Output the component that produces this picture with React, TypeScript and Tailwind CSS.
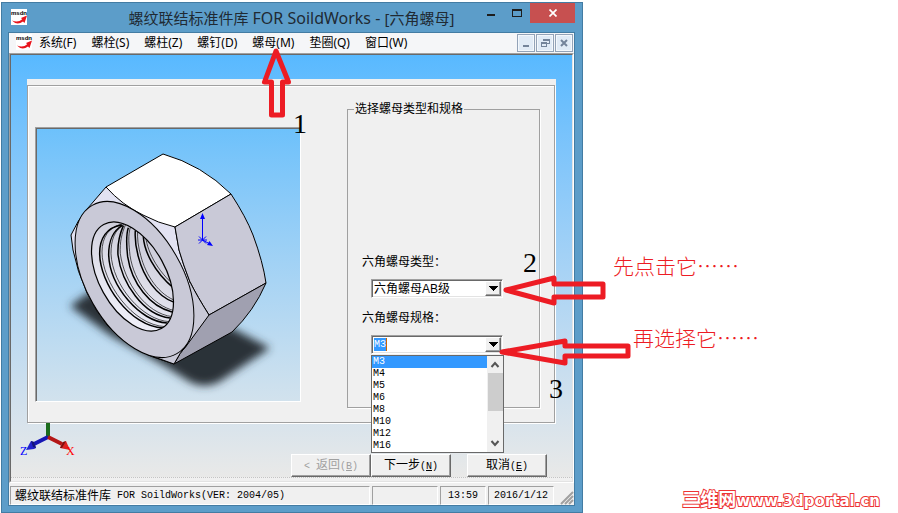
import React from "react";

const song = "font-['Liberation_Sans','Noto_Sans_CJK_SC',sans-serif]";

const menus = ["系统(F)", "螺栓(S)", "螺柱(Z)", "螺钉(D)", "螺母(M)", "垫圈(Q)", "窗口(W)"];
const sizes = ["M3", "M4", "M5", "M6", "M8", "M10", "M12", "M16"];

function Mono({ children }: { children: React.ReactNode }) {
  return (
    <span className="font-['Liberation_Mono',monospace] text-[10px] whitespace-pre">{children}</span>
  );
}

function MsdnIcon() {
  return (
    <svg width="18" height="16" viewBox="0 0 18 16" aria-hidden="true" className="shrink-0">
      <rect width="16" height="16" fill="#fff" />
      <text x="0" y="6" fontSize="6" fontWeight="bold" fontFamily="Liberation Sans, sans-serif" fill="#000">
        msdn
      </text>
      <path d="M1 11.5 Q6 17 12 12.5 L13.5 14 L16 6.5 L10 9 L11.2 10.3 Q7 14 1 11.5Z" fill="#e8141c" />
    </svg>
  );
}

function StepMark({ className, children }: { className: string; children: React.ReactNode }) {
  return (
    <span className={`absolute z-30 font-['Liberation_Serif',serif] text-[28px] leading-7 text-black ${className}`}>
      {children}
    </span>
  );
}

function DropArrow() {
  return (
    <svg width="9" height="5" viewBox="0 0 9 5" aria-hidden="true" shapeRendering="crispEdges">
      <path d="M0 0h9l-4.500 5z" fill="#000" />
    </svg>
  );
}

const raised =
  "bg-[#f0f0f0] border border-t-white border-l-white border-r-[#696969] border-b-[#696969] shadow-[inset_-1px_-1px_0_#a0a0a0]";
const sunken =
  "bg-white border border-t-[#a0a0a0] border-l-[#a0a0a0] border-r-white border-b-white shadow-[inset_1px_1px_0_#696969,inset_-1px_-1px_0_#e3e3e3]";

const threads = [
  "M185 255C140 262 119 295 119 340C119 430 210 560 309 564",
  "M187 256C155 275 146 305 146 345C150 440 240 545 321 549",
  "M190 257C178 285 172 310 174 345C185 430 250 525 330 534",
  "M205 263C196 290 200 320 203 350C215 430 270 500 336 516",
  "M226 272C224 300 228 325 235 350C250 410 290 470 345 488",
  "M250 290C252 330 280 395 345 448",
];

function NutDrawing() {
  const hole = { cx: 132.5, cy: 276.5, rx: 59.5, ry: 33.3 };
  return (
    <svg viewBox="37 129 263 272" className="block h-[272px] w-full" role="img" aria-label="六角螺母">
      <defs>
        <filter id="soft" x="-20%" y="-20%" width="140%" height="140%">
          <feGaussianBlur stdDeviation="4" />
        </filter>
        <clipPath id="hole">
          <ellipse {...hole} transform="rotate(61 132.5 276.5)" />
        </clipPath>
        <linearGradient id="bore" x1="0" y1="0" x2="1" y2="1">
          <stop offset="0" stopColor="#c4c4d2" />
          <stop offset="1" stopColor="#f6f6ff" />
        </linearGradient>
      </defs>
      <path
        d="M70 306 L90 292 L140 300 L232 328 L270 348 L219 382 Q204 389 190 382 L165 366 L110 335Z"
        fill="#2b3237"
        filter="url(#soft)"
      />
      <g stroke="#000" strokeWidth="1" strokeLinejoin="round">
        <path
          d="M106 187 L88 208 Q77 221 71 235 L73 250 Q77 271 87 293 Q96 312 107 325 Q117 336 130 345 Q141 352 153 357 L174 364 L209 315 Q197 296 190 282 Q183 264 179 250 L175 227 L140 200Z"
          fill="#e2e2f2"
        />
        <path d="M163 154 L106 187 Q122 205 143 215 Q158 223 175 227 L231 194 Q202 165 163 154Z" fill="#fff" />
        <path
          d="M175 227 L231 194 Q246 217 253 235 Q263 262 266 283 L209 315 Q197 296 190 282 Q183 264 179 250Z"
          fill="#c9c9d7"
        />
        <path d="M190 282 Q197 296 209 315 L187 345Z" fill="#c9c9d7" stroke="none" />
        <path d="M209 315 L266 283 Q254 311 232 332 L174 364 Q180 352 187 345Z" fill="#a0a0b0" />
        <path d="M146 354 L174 364 Q180 352 187 345 Q177 356 160 356Z" fill="#c9c9d7" />
        <ellipse cx="134.5" cy="279.5" rx="85.4" ry="48" transform="rotate(60.3 134.5 279.5)" fill="#c9c9d7" />
        <path d="M209 315 Q197 296 190 282" fill="none" />
        <ellipse {...hole} transform="rotate(61 132.5 276.5)" fill="url(#bore)" strokeWidth="1.2" />
      </g>
      <g clipPath="url(#hole)">
        <g transform="translate(60 140) scale(0.3333)" fill="none" stroke="#000">
          {threads.map((d) => (
            <g key={d}>
              <path d={d} strokeWidth="4.500" />
              <path d={d} strokeWidth="2" transform="translate(7 -4)" />
            </g>
          ))}
        </g>
      </g>
      <g stroke="#00f" fill="#00f" strokeWidth="1">
        <path d="M202.500 240V216M202.500 240L210 244" />
        <path d="M202.500 213l2.500 6h-5zM213 246l-6-1 2.500-4z" stroke="none" />
        <path d="M198 240h9M199 236.500l7 7M206 236.500l-7 7" />
      </g>
    </svg>
  );
}

function Triad() {
  return (
    <svg width="60" height="38" viewBox="20 424 60 38" aria-hidden="true">
      <path d="M46 424h4v14h-4z" fill="#1b6b1b" />
      <path d="M48 438L34 445" stroke="#1616b4" strokeWidth="4" />
      <path d="M48 438L62 445" stroke="#b41616" strokeWidth="4" />
      <path d="M26 451L31 442L34 443L36 449L34 450Z" fill="#2222cc" />
      <path d="M31 442l3 1 2 6-3-1z" fill="#12127a" />
      <path d="M70 451L60 449L62 444L66 442Z" fill="#dd2222" />
      <path d="M66 442l-3 1-3 6 2 0z" fill="#801010" />
      <g fontFamily="Liberation Serif, serif" fontSize="12">
        <text x="20" y="456" fill="#00f">Z</text>
        <text x="66" y="456" fill="#f00">X</text>
      </g>
    </svg>
  );
}

function TitleBar() {
  return (
    <header className="grid h-[29px] grid-cols-[1fr_auto_1fr] items-start">
      <span className="pt-1.5 pl-[3px]"><MsdnIcon /></span>
      <h1 className="pt-1 font-['Noto_Sans','Noto_Sans_CJK_SC',sans-serif] text-[15px] leading-[22px] whitespace-nowrap text-[#202a33]">
        螺纹联结标准件库 <span className="text-base leading-[22px]">FOR SoildWorks - </span>[六角螺母]
      </h1>
      <div className="flex justify-end">
        <button aria-label="最小化" className="flex h-5 w-[25px] items-center justify-center pt-1">
          <span className="h-0.5 w-2 bg-[#1d1d1d]" />
        </button>
        <button aria-label="最大化" className="flex h-5 w-[27px] items-center justify-center">
          <span className="h-2 w-2.5 border border-t-2 border-[#1d1d1d]" />
        </button>
        <button aria-label="关闭" className="flex h-5 w-[45px] items-center justify-center bg-[#c75050]">
          <svg width="8" height="8" viewBox="0 0 8 8" aria-hidden="true">
            <path d="M0.500 0.500l7 7M7.500 0.500l-7 7" stroke="#fff" strokeWidth="1.700" />
          </svg>
        </button>
      </div>
    </header>
  );
}

const childButton =
  "flex h-[18px] w-[18px] items-center justify-center border border-[#93a3b8] bg-[#e1ebf6] shadow-[inset_0_0_0_1px_#f4f8fc]";

function MenuBar() {
  return (
    <nav className="flex h-5 items-start bg-[#f5f6f8] pr-px pl-[7px]">
      <span className="pt-px pr-[5px]"><MsdnIcon /></span>
      <ul className="flex flex-1 gap-[15px] pt-px font-['Noto_Sans','Noto_Sans_CJK_SC',sans-serif] text-xs leading-[18px] whitespace-nowrap text-black">
        {menus.map((m) => (
          <li key={m} className="relative">
            <button>{m}</button>
            {m === "螺母(M)" && (
              <svg width="34" height="72" viewBox="0 0 34 72" aria-hidden="true" className="absolute top-3 left-2 z-30">
                <path d="M16 5L4.500 36H11.500V69H22.500V36H28.500Z" fill="none" stroke="#ed1c24" strokeWidth="5" strokeLinejoin="round" />
              </svg>
            )}
          </li>
        ))}
      </ul>
      <div className="flex gap-px pt-px">
        <button aria-label="最小化子窗口" className={childButton}>
          <span className="mt-1.5 h-0.5 w-1.5 bg-[#74849a]" />
        </button>
        <button aria-label="还原子窗口" className={childButton}>
          <svg width="9" height="8" viewBox="0 0 9 8" fill="none" stroke="#74849a" aria-hidden="true" shapeRendering="crispEdges">
            <path d="M2.500 2V0.500h6v4H6M0.500 3.500h5v4h-5zM2 1h7M0 4h6" />
          </svg>
        </button>
        <button aria-label="关闭子窗口" className={childButton}>
          <svg width="8" height="8" viewBox="0 0 8 8" aria-hidden="true">
            <path d="M1 1l6 6M7 1l-6 6" stroke="#74849a" strokeWidth="2" />
          </svg>
        </button>
      </div>
    </nav>
  );
}

function SizeList() {
  return (
    <div className="absolute top-[19px] -left-px z-20 flex w-[133px] border border-[#696969] bg-white">
      <ul role="listbox" aria-label="六角螺母规格" className="flex-1">
        {sizes.map((s) => (
          <li
            key={s}
            role="option"
            aria-selected={s === "M3"}
            className={`flex h-3 pl-px leading-3 ${s === "M3" ? "bg-[#3399ff] text-white" : "text-black"}`}
          >
            <Mono>{s}</Mono>
          </li>
        ))}
      </ul>
      <div className="flex w-4 flex-col items-center bg-[#f0f0f0]">
        <svg width="16" height="17" viewBox="0 0 16 17" aria-hidden="true">
          <path d="M4.500 11l3.500-4 3.500 4" fill="none" stroke="#555" strokeWidth="2" />
        </svg>
        <span className="h-[38px] w-[15px] bg-[#cdcdcd]" />
        <span className="flex-1" />
        <svg width="16" height="17" viewBox="0 0 16 17" aria-hidden="true">
          <path d="M4.500 6l3.500 4 3.500-4" fill="none" stroke="#555" strokeWidth="2" />
        </svg>
      </div>
    </div>
  );
}

function NutForm() {
  return (
    <fieldset
      className={`relative w-[193px] shrink-0 border border-[#a0a0a0] pb-[53px] pl-[14px] shadow-[1px_1px_0_#fff] ${song} text-xs leading-[14px] text-black`}
    >
      <legend className="-ml-2 px-px">选择螺母类型和规格</legend>
      <div className="pt-[139px]">
        <label htmlFor="kind" className="block">六角螺母类型：</label>
        <div className={`relative mt-2.5 ml-[9px] h-[19px] w-[132px] ${sunken}`}>
          <select id="kind" className="h-full w-full appearance-none pl-0.5 leading-4 outline-none">
            <option>六角螺母AB级</option>
          </select>
          <span className={`pointer-events-none absolute top-px right-px flex h-[15px] w-4 items-center justify-center ${raised}`}>
            <DropArrow />
          </span>
          <svg width="106" height="34" viewBox="0 0 106 34" aria-hidden="true" className="absolute -top-1.5 left-[130px] z-30">
            <path d="M4 16L52 4V10H101V23H52V29Z" fill="none" stroke="#ed1c24" strokeWidth="5" strokeLinejoin="round" />
          </svg>
        </div>
        <label htmlFor="spec" className="mt-[13px] block">六角螺母规格：</label>
        <div className={`relative mt-2.5 ml-[9px] flex h-[19px] w-[132px] items-center justify-between pr-px pl-0.5 ${sunken}`}>
          <input
            id="spec"
            defaultValue="M3"
            className="h-[13px] w-[13px] border-r border-[#cc6600] bg-[#3399ff] font-['Liberation_Mono',monospace] text-[10px] text-white outline-none"
          />
          <button aria-label="展开规格列表" className={`flex h-[15px] w-4 items-center justify-center ${raised}`}>
            <DropArrow />
          </button>
          <SizeList />
          <svg width="134" height="34" viewBox="0 0 134 34" aria-hidden="true" className="absolute top-0 left-[126px] z-30">
            <path d="M4 16L67 5V10H130V20H67V27Z" fill="none" stroke="#ed1c24" strokeWidth="5" strokeLinejoin="round" />
          </svg>
        </div>
      </div>
      <StepMark className="top-[133px] right-0.5">2</StepMark>
      <StepMark className="top-[259px] -right-6">3</StepMark>
    </fieldset>
  );
}

const wizardButton = `h-[23px] w-20 ${raised}`;
const statusCell =
  "flex h-[19px] items-center border border-t-[#a0a0a0] border-l-[#a0a0a0] border-r-white border-b-white";

export default function App() {
  return (
    <main className="flex min-h-screen bg-white">
      <section className="mt-0.5 ml-px flex min-w-0 flex-1 flex-col border border-[#437ca3] bg-[#5c9dc9] pr-[7px] pb-1.5 pl-1.5">
        <TitleBar />
        <div className="flex flex-1 flex-col border border-[#437ca3] bg-[#f0f0f0]">
          <MenuBar />
          <div className="border border-t-[#a0a0a0] border-r-white border-b-white border-l-[#a0a0a0]">
            <div className="border border-t-[#696969] border-r-[#e3e3e3] border-b-[#e3e3e3] border-l-[#696969] pb-[3px]">
              <div className="flex flex-col border-b border-dotted border-[#c4c4c4] bg-linear-to-b from-[#58b9ff] to-[#e9e9e8] bg-clip-padding pt-6">
                <div className="mx-4 bg-[#f0f0f0] pt-1.5 pr-px">
                  <div className="flex gap-[46px] border border-[#a0a0a0] pt-4 pr-[14px] pb-[14px] pl-[7px] shadow-[inset_1px_1px_0_#fff,1px_1px_0_#fff]">
                    <figure className="relative mt-[25px] h-[275px] min-w-0 flex-1 border border-t-[#a0a0a0] border-r-white border-b-white border-l-[#a0a0a0]">
                      <div className="h-full overflow-hidden border-t border-l border-[#696969] bg-linear-to-b from-[#6dc1fb] to-[#d2e2ed]">
                        <NutDrawing />
                      </div>
                      <StepMark className="-top-[18px] -right-[7px]">1</StepMark>
                    </figure>
                    <NutForm />
                  </div>
                </div>
                <div className="flex justify-between pr-[25px] pl-[9px]">
                  <Triad />
                  <div className={`flex pt-[31px] ${song} text-xs text-black`}>
                    <button disabled className={`${wizardButton} text-[#a0a0a0]`}>
                      <Mono>&lt; </Mono>返回<Mono>(<u>B</u>)</Mono>
                    </button>
                    <button className={wizardButton}>
                      下一步<Mono>(<u>N</u>)</Mono>
                    </button>
                    <button className={`${wizardButton} ml-4`}>
                      取消<Mono>(<u>E</u>)</Mono>
                    </button>
                  </div>
                </div>
              </div>
            </div>
          </div>
          <footer className={`mt-auto flex gap-0.5 pt-0.5 pl-px ${song} text-xs text-black`}>
            <div className={`${statusCell} min-w-0 flex-1 pl-1 whitespace-nowrap`}>
              螺纹联结标准件库<Mono> FOR SoildWorks(VER: 2004/05)</Mono>
            </div>
            <div className={`${statusCell} w-[66px]`} />
            <div className={`${statusCell} w-[46px] justify-center`}><Mono>13:59</Mono></div>
            <div className={`${statusCell} w-[66px] justify-center`}><Mono>2016/1/12</Mono></div>
            <svg width="18" height="19" viewBox="0 0 18 19" aria-hidden="true">
              <path d="M5 18L17 6M9 18L17 10M13 18L17 14" stroke="#a0a0a0" strokeWidth="2" />
            </svg>
          </footer>
        </div>
      </section>
      <aside className="flex w-[315px] shrink-0 flex-col font-['Noto_Sans_CJK_SC',sans-serif] font-light text-[#ed1c24]">
        <p className="pt-[250px] pl-[30px] text-[21px] leading-[30px]">先点击它……</p>
        <p className="pt-[42px] pl-[50px] text-[21px] leading-[30px]">再选择它……</p>
        <p className="mt-auto pr-[18px] pb-0.5 text-right leading-5 font-bold whitespace-nowrap text-white [-webkit-text-stroke:2px_#ed3333] [paint-order:stroke_fill]">
          <span className="text-[18px]">三维网</span>
          <span className="font-['DejaVu_Sans',sans-serif] text-[15px]">www.3dportal.cn</span>
        </p>
      </aside>
    </main>
  );
}
